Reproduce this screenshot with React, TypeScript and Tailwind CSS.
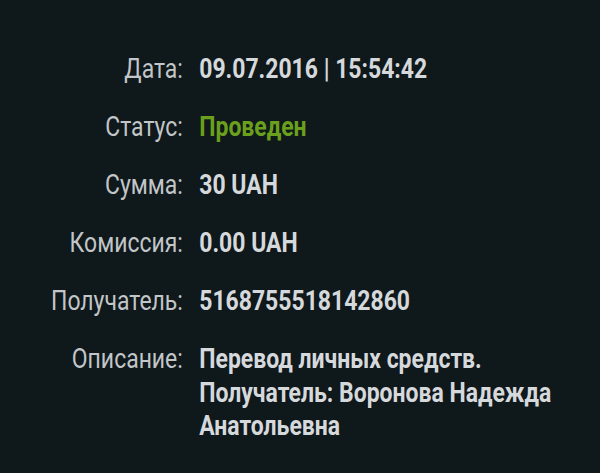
const rows: { label: string; value: string; green?: boolean }[] = [
  { label: 'Дата:', value: '09.07.2016 | 15:54:42' },
  { label: 'Статус:', value: 'Проведен', green: true },
  { label: 'Сумма:', value: '30 UAH' },
  { label: 'Комиссия:', value: '0.00 UAH' },
  { label: 'Получатель:', value: '5168755518142860' },
  { label: 'Описание:', value: 'Перевод личных средств. Получатель: Воронова Надежда Анатольевна' },
];

export default function App() {
  return (
    <div className="w-[600px] h-[473px] overflow-hidden bg-[#0f181b]" style={{ fontFamily: 'Roboto, "Noto Sans", sans-serif' }}>
      <div className="pt-[52px] origin-top-left scale-x-[0.82] w-[732px]">
        <div className="flex flex-col gap-[24.5px] text-[28px] leading-[33.5px]">
          {rows.map((r) => (
            <div key={r.label} className="flex">
              <div className="w-[223px] shrink-0 text-right text-[#c2c6c8]">{r.label}</div>
              <div className={`pl-[20px] w-[480px] font-bold ${r.green ? 'text-[#6ba01c]' : 'text-[#d6d9db]'}`}>{r.value}</div>
            </div>
          ))}
        </div>
      </div>
    </div>
  );
}
